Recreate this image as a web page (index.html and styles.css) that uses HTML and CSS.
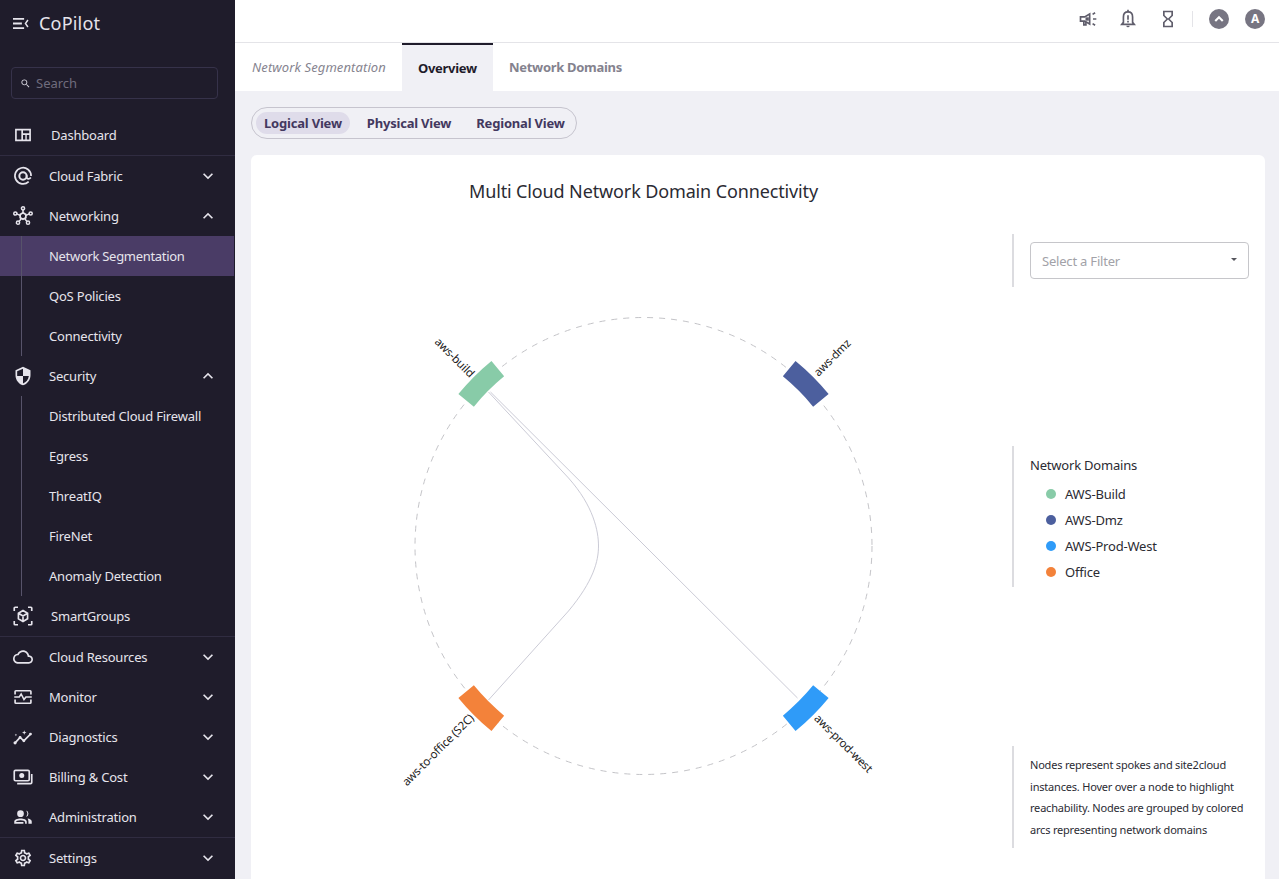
FILE: index.html
```html
<!DOCTYPE html>
<html lang="en">
<head>
    <meta charset="UTF-8">
    <meta name="viewport" content="width=device-width, initial-scale=1.0">
    <title>CoPilot - Network Segmentation</title>
    <link rel="stylesheet" href="styles.css">
</head>
<body>
<div class="app">
    <aside class="sidebar">
        <div class="brand">
            <svg class="brandIcon" viewBox="0 0 18 14"><path d="M0 .8h12.500v2H0zM0 6h10v2H0zM0 11.200h12.500v2H0zM17.500 3.600L15 7l2.500 3.400-1.400 1L13 7l3.100-4.400z"/></svg>
            <span class="brandName">CoPilot</span>
        </div>
        <div class="search">
            <svg class="searchIcon" viewBox="0 0 24 24"><path d="M15.500 14h-.79l-.28-.27C15.410 12.590 16 11.110 16 9.500 16 5.910 13.090 3 9.500 3S3 5.910 3 9.500 5.910 16 9.500 16c1.610 0 3.090-.59 4.230-1.570l.27.28v.79l5 4.990L20.490 19l-4.990-5zm-6 0C7.010 14 5 11.990 5 9.500S7.010 5 9.500 5 14 7.010 14 9.500 11.990 14 9.500 14z"/></svg>
            <span>Search</span>
        </div>
        <nav class="nav">
            <div class="navGroup">
                <a class="navRow wide">
                    <svg class="navIcon" viewBox="0 0 24 24"><path fill-rule="evenodd" d="M2.500 4.500h19v15h-19zM4.500 6.500v11h5.500v-11zM12 6.500v3.500h7.500V6.500zM12 12v5.500h2.800V12zM16.500 12v5.500h3V12z"/></svg>
                    <span>Dashboard</span>
                </a>
            </div>
            <div class="navGroup">
                <a class="navRow">
                    <svg class="navIcon" viewBox="0 0 24 24"><path class="line" d="M18.800 18.700A9.700 9.700 0 1 1 21.700 12" stroke-width="2"/><circle class="line" cx="12" cy="12" r="4.400" stroke-width="2.400"/><path class="line" d="M16.400 11v2.500c0 2.200 3.200 2.800 5 .2" stroke-width="2"/></svg>
                    <span>Cloud Fabric</span>
                    <svg class="chevron" viewBox="0 0 24 24"><path d="M16.590 8.590L12 13.170 7.410 8.590 6 10l6 6 6-6z"/></svg>
                </a>
                <a class="navRow">
                    <svg class="navIcon" viewBox="0 0 24 24"><path class="line" stroke-width="1.800" d="M12 4.500v4M4.500 9.500l4.500 2M19.500 9.500l-4.500 2M7 19l3-4M17 19l-3-4"/><path class="line" stroke-width="2.100" d="M12 8.200l3.400 2v3.800L12 16l-3.400-2v-3.800z"/><circle class="line" stroke-width="1.800" cx="12" cy="2.800" r="1.900"/><circle class="line" stroke-width="1.800" cx="2.800" cy="9" r="1.900"/><circle class="line" stroke-width="1.800" cx="21.200" cy="9" r="1.900"/><circle class="line" stroke-width="1.800" cx="6" cy="20" r="1.900"/><circle class="line" stroke-width="1.800" cx="18" cy="20" r="1.900"/></svg>
                    <span>Networking</span>
                    <svg class="chevron" viewBox="0 0 24 24"><path d="M12 8l-6 6 1.410 1.410L12 10.830l4.590 4.580L18 14z"/></svg>
                </a>
                <div class="subNav">
                    <a class="subRow active">Network Segmentation</a>
                    <a class="subRow">QoS Policies</a>
                    <a class="subRow">Connectivity</a>
                </div>
                <a class="navRow">
                    <svg class="navIcon" viewBox="0 0 24 24"><path d="M12 1L3 5v6c0 5.550 3.840 10.740 9 12 5.160-1.260 9-6.450 9-12V5l-9-4zm0 10.990h7c-.53 4.120-3.280 7.790-7 8.940V12H5V6.300l7-3.110v8.800z"/></svg>
                    <span>Security</span>
                    <svg class="chevron" viewBox="0 0 24 24"><path d="M12 8l-6 6 1.410 1.410L12 10.830l4.590 4.580L18 14z"/></svg>
                </a>
                <div class="subNav">
                    <a class="subRow">Distributed Cloud Firewall</a>
                    <a class="subRow">Egress</a>
                    <a class="subRow">ThreatIQ</a>
                    <a class="subRow">FireNet</a>
                    <a class="subRow">Anomaly Detection</a>
                </div>
                <a class="navRow wide">
                    <svg class="navIcon" viewBox="0 0 24 24"><path class="line" stroke-width="2" d="M1.500 6V2.500a1 1 0 0 1 1-1H6M18 1.500h3.500a1 1 0 0 1 1 1V6M22.500 18v3.500a1 1 0 0 1-1 1H18M6 22.500H2.500a1 1 0 0 1-1-1V18"/><path class="line" stroke-width="2" d="M12 5.500l5.500 3.200v6.600L12 18.500l-5.500-3.200V8.700zM6.500 8.700l5.500 3.200 5.500-3.200M12 11.900v6.600"/></svg>
                    <span>SmartGroups</span>
                </a>
            </div>
            <div class="navGroup">
                <a class="navRow">
                    <svg class="navIcon" viewBox="0 0 24 24"><path d="M19.350 10.040C18.670 6.590 15.640 4 12 4 9.110 4 6.600 5.640 5.350 8.040 2.340 8.360 0 10.910 0 14c0 3.310 2.690 6 6 6h13c2.760 0 5-2.240 5-5 0-2.640-2.050-4.780-4.650-4.960zM19 18H6c-2.210 0-4-1.790-4-4 0-2.050 1.530-3.760 3.560-3.970l1.070-.11.5-.95C8.080 7.140 9.940 6 12 6c2.620 0 4.880 1.860 5.390 4.430l.3 1.500 1.530.11c1.560.1 2.780 1.410 2.780 2.960 0 1.650-1.350 3-3 3z"/></svg>
                    <span>Cloud Resources</span>
                    <svg class="chevron" viewBox="0 0 24 24"><path d="M16.590 8.590L12 13.170 7.410 8.590 6 10l6 6 6-6z"/></svg>
                </a>
                <a class="navRow">
                    <svg class="navIcon" viewBox="0 0 24 24"><path class="line" stroke-width="2" d="M2.500 9V5.500a1 1 0 0 1 1-1h17a1 1 0 0 1 1 1V9M2.500 15v3.500a1 1 0 0 0 1 1h17a1 1 0 0 0 1-1V15"/><path class="line" stroke-width="1.900" d="M1.500 12h6l2.300-3.600 3.400 6.600 2.300-3h7"/></svg>
                    <span>Monitor</span>
                    <svg class="chevron" viewBox="0 0 24 24"><path d="M16.590 8.590L12 13.170 7.410 8.590 6 10l6 6 6-6z"/></svg>
                </a>
                <a class="navRow">
                    <svg class="navIcon" viewBox="0 0 24 24"><path class="line" stroke-width="2" d="M2.500 19L8.500 12.500l4.500 4L21 8.500"/><circle cx="2.500" cy="19" r="1.900"/><circle cx="8.500" cy="12.500" r="1.700"/><circle cx="13" cy="16.500" r="1.700"/><circle cx="21" cy="8.500" r="1.700"/><path d="M13.500 4l.7 2 2 .7-2 .7-.7 2-.7-2-2-.7 2-.7zM3.500 8l.4 1.100 1.100.4-1.100.4-.4 1.100-.4-1.100-1.100-.4 1.100-.4z"/></svg>
                    <span>Diagnostics</span>
                    <svg class="chevron" viewBox="0 0 24 24"><path d="M16.590 8.590L12 13.170 7.410 8.590 6 10l6 6 6-6z"/></svg>
                </a>
                <a class="navRow">
                    <svg class="navIcon" viewBox="0 0 24 24"><rect class="line" stroke-width="2" x="1.500" y="4" width="18" height="12.500" rx="1.500"/><circle cx="10.500" cy="10.200" r="3"/><path class="line" stroke-width="2" d="M22.500 8.500v10a1.500 1.500 0 0 1-1.500 1.500H5"/></svg>
                    <span>Billing &amp; Cost</span>
                    <svg class="chevron" viewBox="0 0 24 24"><path d="M16.590 8.590L12 13.170 7.410 8.590 6 10l6 6 6-6z"/></svg>
                </a>
                <a class="navRow">
                    <svg class="navIcon" viewBox="0 0 24 24"><circle cx="9" cy="8" r="4"/><path d="M15.500 4.200a3.900 3.900 0 0 1 0 7.600 5.600 5.600 0 0 0 0-7.600z"/><path d="M1.500 20v-2.500c0-2.200 3.500-3.700 7.500-3.700s7.500 1.500 7.500 3.700V20h-2v-2.200c0-.8-2.500-2-5.500-2s-5.500 1.200-5.500 2v.2h9v2z"/><path d="M17.500 13.800c2.500.4 5 1.500 5 3.700V20h-4v-2.500c0-1.500-.4-2.700-1-3.700z"/></svg>
                    <span>Administration</span>
                    <svg class="chevron" viewBox="0 0 24 24"><path d="M16.590 8.590L12 13.170 7.410 8.590 6 10l6 6 6-6z"/></svg>
                </a>
            </div>
            <div class="navGroup">
                <a class="navRow">
                    <svg class="navIcon" viewBox="0 0 24 24"><path d="M19.430 12.980c.04-.32.07-.64.07-.98 0-.34-.03-.66-.07-.98l2.110-1.650c.19-.15.24-.42.12-.64l-2-3.460c-.09-.16-.26-.25-.44-.25-.06 0-.12.01-.17.03l-2.490 1c-.52-.4-1.080-.73-1.690-.98l-.38-2.650C14.460 2.180 14.250 2 14 2h-4c-.25 0-.46.18-.49.42l-.38 2.650c-.61.25-1.170.59-1.690.98l-2.490-1c-.06-.02-.12-.03-.18-.03-.17 0-.34.09-.43.25l-2 3.460c-.13.22-.07.49.12.64l2.110 1.650c-.04.32-.07.65-.07.98 0 .33.03.66.07.98l-2.110 1.650c-.19.15-.24.42-.12.64l2 3.460c.09.16.26.25.44.25.06 0 .12-.01.17-.03l2.490-1c.52.4 1.080.73 1.690.98l.38 2.650c.03.24.24.42.49.42h4c.25 0 .46-.18.49-.42l.38-2.650c.61-.25 1.170-.59 1.690-.98l2.490 1c.06.02.12.03.18.03.17 0 .34-.09.43-.25l2-3.460c.12-.22.07-.49-.12-.64l-2.110-1.650zm-1.980-1.710c.04.31.05.52.05.73 0 .21-.02.43-.05.73l-.14 1.130.89.7 1.080.84-.7 1.210-1.270-.51-1.040-.42-.9.68c-.43.32-.84.56-1.250.73l-1.060.43-.16 1.130-.2 1.350h-1.400l-.19-1.350-.16-1.130-1.060-.43c-.43-.18-.83-.41-1.230-.71l-.91-.7-1.060.43-1.270.51-.7-1.210 1.080-.84.89-.7-.14-1.130c-.03-.31-.05-.54-.05-.74s.02-.43.05-.73l.14-1.130-.89-.7-1.080-.84.7-1.210 1.270.51 1.040.42.9-.68c.43-.32.84-.56 1.250-.73l1.060-.43.16-1.130.2-1.350h1.390l.19 1.350.16 1.130 1.060.43c.43.18.83.41 1.230.71l.91.7 1.060-.43 1.270-.51.7 1.210-1.070.85-.89.7.14 1.130zM12 8c-2.210 0-4 1.790-4 4s1.790 4 4 4 4-1.790 4-4-1.790-4-4-4zm0 6c-1.100 0-2-.9-2-2s.9-2 2-2 2 .9 2 2-.9 2-2 2z"/></svg>
                    <span>Settings</span>
                    <svg class="chevron" viewBox="0 0 24 24"><path d="M16.590 8.590L12 13.170 7.410 8.590 6 10l6 6 6-6z"/></svg>
                </a>
            </div>
        </nav>
    </aside>

    <main class="main">
        <header class="topBar">
            <svg class="topIcon" viewBox="0 0 24 24"><path class="line" stroke-width="2" d="M3 9.500h5l6-3.500v12l-6-3.500H3z"/><path class="line" stroke-width="2" d="M7 15v4h2.500v-3.500"/><path d="M9 10h4v4H9z"/><path class="line" stroke-width="2" d="M18 12h4M17.500 6.500l3-2M17.500 17.500l3 2"/></svg>
            <svg class="topIcon" viewBox="0 0 24 24"><path class="line" stroke-width="2" d="M12 3.500c-3.400 0-5.500 2.600-5.500 6V16L4.500 18.500h15L17.500 16V9.500c0-3.400-2.100-6-5.500-6z"/><path d="M11 1h2v3h-2zM11 7.500h2v5.500h-2zM11 14.200h2v2h-2zM10 20h4a2 2 0 0 1-4 0z"/></svg>
            <svg class="topIcon" viewBox="0 0 24 24"><path d="M6 2v6h.01L6 8.010 10 12l-4 4 .01.01H6V22h12v-5.990h-.01L18 16l-4-4 4-3.990-.01-.01H18V2H6zm10 14.500V20H8v-3.500l4-4 4 4zm-4-5l-4-4V4h8v3.500l-4 4z"/></svg>
            <span class="topDivider"></span>
            <span class="avatar"><svg viewBox="0 0 24 24"><path d="M12 5.500l-9 9 3 3 6-6 6 6 3-3z"/></svg></span>
            <span class="avatar">A</span>
        </header>

        <div class="tabs">
            <span class="crumb">Network Segmentation</span>
            <a class="tab active">Overview</a>
            <a class="tab">Network Domains</a>
        </div>

        <div class="content">
            <div class="viewSwitch">
                <a class="viewBtn active">Logical View</a>
                <a class="viewBtn">Physical View</a>
                <a class="viewBtn">Regional View</a>
            </div>

            <section class="card">
                <div class="chartCol">
                    <h2 class="chartTitle">Multi Cloud Network Domain Connectivity</h2>
                    <svg class="chart" viewBox="-368.5 -320 737 660">
                        <circle class="ring" r="228.500"/>
                        <line class="link" x1="-153" y1="-154" x2="154" y2="152"/>
                        <path class="link" d="M-155 -154 L-75 -68 C-50 -40 -45 -15 -45 0 C-45 15 -50 35 -75 65 L-155 154"/>
                        <path class="arc build" transform="rotate(-45)" d="M-23.400 -238.400A239.500 239.500 0 0 1 23.400 -238.400L21.400 -218.500A219.500 219.500 0 0 0 -21.400 -218.500Z"/>
                        <path class="arc dmz" transform="rotate(45)" d="M-23.400 -238.400A239.500 239.500 0 0 1 23.400 -238.400L21.400 -218.500A219.500 219.500 0 0 0 -21.400 -218.500Z"/>
                        <path class="arc prod" transform="rotate(135)" d="M-23.400 -238.400A239.500 239.500 0 0 1 23.400 -238.400L21.400 -218.500A219.500 219.500 0 0 0 -21.400 -218.500Z"/>
                        <path class="arc office" transform="rotate(-135)" d="M-23.400 -238.400A239.500 239.500 0 0 1 23.400 -238.400L21.400 -218.500A219.500 219.500 0 0 0 -21.400 -218.500Z"/>
                        <text class="nodeLabel" text-anchor="end" transform="translate(-174 -168) rotate(45)">aws-build</text>
                        <text class="nodeLabel" transform="translate(175 -169) rotate(-45)">aws-dmz</text>
                        <text class="nodeLabel" text-anchor="end" transform="translate(-169 173) rotate(-45)">aws-to-office (S2C)</text>
                        <text class="nodeLabel" transform="translate(170 173) rotate(45)">aws-prod-west</text>
                    </svg>
                </div>
                <div class="sideCol">
                    <div class="sideBlock filterBlock">
                        <div class="select">
                            <span>Select a Filter</span>
                            <i class="caret"></i>
                        </div>
                    </div>
                    <div class="sideBlock legendBlock">
                        <div class="legendTitle">Network Domains</div>
                        <div class="legendRow"><i class="dot build"></i>AWS-Build</div>
                        <div class="legendRow"><i class="dot dmz"></i>AWS-Dmz</div>
                        <div class="legendRow"><i class="dot prod"></i>AWS-Prod-West</div>
                        <div class="legendRow"><i class="dot office"></i>Office</div>
                    </div>
                    <div class="sideBlock noteBlock">
                        Nodes represent spokes and site2cloud instances. Hover over a node to highlight reachability. Nodes are grouped by colored arcs representing network domains
                    </div>
                </div>
            </section>
        </div>
    </main>
</div>
</body>
</html>
```

FILE: styles.css
```css
* {
    box-sizing: border-box;
}

body {
    margin: 0;
    font-family: "Noto Sans", "Open Sans", sans-serif;
    font-size: 13px;
    letter-spacing: -0.2px;
    color: #2b2b33;
    background-color: #f0f0f5;
}

.app {
    display: flex;
    height: 100vh;
    overflow: hidden;
}

svg {
    display: block;
    fill: currentColor;
}

svg .line {
    fill: none;
    stroke: currentColor;
}

/* sidebar */
.sidebar {
    width: 235px;
    flex-shrink: 0;
    background-color: #1f1c2b;
    color: #e6e4ec;
}

.brand {
    display: flex;
    align-items: center;
    height: 46px;
    padding-left: 13px;
}

.brandIcon {
    width: 16px;
    height: 13px;
    margin-right: 10px;
}

.brandName {
    font-size: 18px;
    letter-spacing: 0.2px;
}

.search {
    display: flex;
    align-items: center;
    height: 32px;
    margin: 21px 17px 16px 11px;
    padding-left: 8px;
    border: 1px solid #36324a;
    border-radius: 4px;
    color: #6f6c7d;
    letter-spacing: 0;
}

.searchIcon {
    width: 11px;
    height: 11px;
    margin-right: 5px;
    color: #d9d7e0;
}

.navGroup {
    border-bottom: 1px solid #302c41;
}

.navGroup:last-child {
    border-bottom: none;
}

.navRow {
    display: flex;
    align-items: center;
    height: 40px;
    padding: 0 17px 0 13px;
}

.navIcon {
    width: 20px;
    height: 20px;
    margin-right: 16px;
    flex-shrink: 0;
}

.navRow.wide .navIcon {
    margin-right: 18px;
}

.chevron {
    width: 20px;
    height: 20px;
    margin-left: auto;
}

.subNav {
    position: relative;
}

.subNav::before {
    content: "";
    position: absolute;
    top: 0;
    bottom: 0;
    left: 21px;
    width: 1px;
    background-color: #57536a;
}

.subRow {
    display: flex;
    align-items: center;
    height: 40px;
    padding-left: 49px;
}

.subRow.active {
    margin-right: 1px;
    letter-spacing: -0.3px;
    background-color: #4a3c66;
}

/* top bar */
.main {
    flex: 1;
    min-width: 0;
    display: flex;
    flex-direction: column;
    overflow: hidden;
}

.topBar {
    display: flex;
    flex-shrink: 0;
    align-items: center;
    justify-content: flex-end;
    height: 43px;
    padding: 0 14px 5px 0;
    background-color: #fff;
    border-bottom: 1px solid #e4e4e8;
    color: #5f5d6b;
}

.topIcon {
    width: 20px;
    height: 20px;
    margin-left: 20px;
}

.topDivider {
    width: 1px;
    height: 16px;
    margin-left: 14px;
    background-color: #e4e4e8;
}

.avatar {
    display: flex;
    align-items: center;
    justify-content: center;
    width: 20px;
    height: 20px;
    margin-left: 16px;
    border-radius: 50%;
    background-color: #777582;
    color: #fff;
    font-size: 12px;
    font-weight: 700;
}

.avatar svg {
    width: 12px;
    height: 12px;
}

/* tabs */
.tabs {
    display: flex;
    flex-shrink: 0;
    height: 48px;
    padding-left: 16px;
    background-color: #fff;
}

.crumb {
    display: flex;
    align-items: center;
    width: 151px;
    padding-left: 1px;
    font-style: italic;
    letter-spacing: 0.1px;
    color: #86848f;
}

.tab {
    display: flex;
    align-items: center;
    padding: 0 16px;
    font-weight: 700;
    letter-spacing: -0.3px;
    color: #84828e;
}

.tab.active {
    width: 91px;
    border-top: 2px solid #1f1c2b;
    background-color: #f0f0f5;
    color: #1f1c2b;
}

/* content */
.content {
    flex: 1;
    min-height: 0;
    padding: 16px 14px 0 16px;
    background-color: #f0f0f5;
}

.viewSwitch {
    display: inline-flex;
    gap: 9px;
    height: 32px;
    padding: 4px 3px 4px 4px;
    border: 1px solid #c6c4ce;
    border-radius: 16px;
    vertical-align: top;
}

.viewBtn {
    display: flex;
    align-items: center;
    padding: 0 8px;
    border-radius: 11px;
    font-weight: 700;
    color: #43385f;
}

.viewBtn.active {
    background-color: #dfdcea;
}

.card {
    display: flex;
    height: 760px;
    margin-top: 16px;
    background-color: #fff;
    border-radius: 6px;
}

.chartCol {
    width: 761px;
    padding-left: 24px;
}

.chartTitle {
    margin: 24px 0 0;
    height: 47px;
    font-size: 18px;
    font-weight: 400;
    line-height: 24px;
    letter-spacing: -0.13px;
    text-align: center;
    color: #2b2b33;
}

.chart {
    width: 737px;
    height: 660px;
    overflow: visible;
}

.ring {
    fill: none;
    stroke: #c4c4c8;
    stroke-width: 1;
    stroke-dasharray: 6 6;
}

.link {
    fill: none;
    stroke: #cbcbd6;
    stroke-width: 1;
}

.arc.build, .dot.build {
    fill: #88cba8;
    background-color: #88cba8;
}

.arc.dmz, .dot.dmz {
    fill: #4c5f9e;
    background-color: #4c5f9e;
}

.arc.prod, .dot.prod {
    fill: #2f9bf8;
    background-color: #2f9bf8;
}

.arc.office, .dot.office {
    fill: #f3823a;
    background-color: #f3823a;
}

.nodeLabel {
    font-size: 11.5px;
    fill: #222;
}

/* right column */
.sideCol {
    flex: 1;
    padding-top: 79px;
}

.sideBlock {
    padding-left: 16px;
    border-left: 2px solid #dcdce0;
}

.filterBlock {
    height: 53px;
    padding-top: 8px;
}

.select {
    display: flex;
    align-items: center;
    justify-content: space-between;
    width: 219px;
    height: 37px;
    padding: 0 11px 0 11px;
    border: 1px solid #c6c6ca;
    border-radius: 4px;
    color: #a2a2a8;
}

.caret {
    width: 0;
    height: 0;
    margin-bottom: 3px;
    border-top: 3px solid #55555c;
    border-left: 3px solid transparent;
    border-right: 3px solid transparent;
}

.legendBlock {
    height: 141px;
    margin-top: 159px;
    padding-top: 9px;
}

.legendTitle {
    height: 26px;
    line-height: 20px;
}

.legendRow {
    display: flex;
    align-items: center;
    height: 26px;
    padding-left: 16px;
}

.dot {
    width: 10px;
    height: 10px;
    margin-right: 9px;
    border-radius: 50%;
}

.noteBlock {
    height: 102px;
    margin-top: 159px;
    padding: 8px 10px 0 16px;
    font-size: 11px;
    line-height: 21.7px;
}
```
